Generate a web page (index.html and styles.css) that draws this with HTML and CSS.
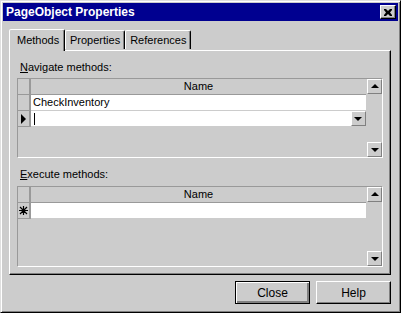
FILE: index.html
```html
<!DOCTYPE html>
<html lang="en">
<head>
    <meta charset="UTF-8">
    <title>PageObject Properties</title>
    <link rel="stylesheet" href="styles.css">
</head>
<body>
    <div class="window">
        <div class="titlebar">
            <span class="title">PageObject Properties</span>
            <span class="close-box">
                <svg width="8" height="7" viewBox="0 0 8 7"><path d="M0 0h2l2 2 2-2h2v1L6 3.5 8 6v1H6L4 5 2 7H0V6l2-2.5L0 1z" fill="#000"/></svg>
            </span>
        </div>

        <div class="tabs">
            <div class="tab active">Methods</div>
            <div class="tab">Properties</div>
            <div class="tab">References</div>
        </div>

        <div class="panel">
            <div class="label"><u>N</u>avigate methods:</div>
            <div class="grid grid-nav">
                <div class="corner"></div>
                <div class="head">Name</div>
                <div class="sb sb-up"><span class="arr up"></span></div>

                <div class="rowhead"></div>
                <div class="cell">CheckInventory</div>

                <div class="rowhead"><span class="arr right"></span></div>
                <div class="cell edit">
                    <span class="caret"></span>
                    <span class="dd"><span class="arr down"></span></span>
                </div>

                <div class="filler"></div>
                <div class="sb sb-down"><span class="arr down"></span></div>
            </div>

            <div class="label second"><u>E</u>xecute methods:</div>
            <div class="grid grid-exec">
                <div class="corner"></div>
                <div class="head">Name</div>
                <div class="sb sb-up"><span class="arr up"></span></div>

                <div class="rowhead">
                    <svg width="9" height="9" viewBox="0 0 9 9"><path d="M4.5 0v9M0 4.5h9M1 1l7 7M8 1l-7 7" stroke="#000" stroke-width="1.2"/></svg>
                </div>
                <div class="cell"></div>

                <div class="filler"></div>
                <div class="sb sb-down"><span class="arr down"></span></div>
            </div>
        </div>

        <div class="buttons">
            <div class="btn default"><span>Close</span></div>
            <div class="btn"><span>Help</span></div>
        </div>
    </div>
</body>
</html>
```

FILE: styles.css
```css
* {
    box-sizing: border-box;
}
body {
    margin: 0;
    font-family: "Liberation Sans", Arial, sans-serif;
    font-size: 11px;
    color: #000;
    background: #ccc;
}
.window {
    width: 401px;
    height: 313px;
    background: #ccc;
    border: 1px solid;
    border-color: #dfdfdf #000 #000 #dfdfdf;
    box-shadow: inset 1px 1px 0 #fff, inset -1px -1px 0 #808080;
    padding: 2px;
    display: flex;
    flex-direction: column;
}
.titlebar {
    height: 18px;
    background: #000090;
    display: flex;
    align-items: center;
    justify-content: space-between;
    padding: 0 2px 0 3px;
}
.title {
    color: #fff;
    font-weight: bold;
    font-size: 12px;
}
.close-box {
    width: 16px;
    height: 14px;
    background: #ccc;
    border: 1px solid;
    border-color: #fff #000 #000 #fff;
    box-shadow: inset -1px -1px 0 #808080;
    display: flex;
    align-items: center;
    justify-content: center;
}

/* tabs */
.tabs {
    display: flex;
    align-items: flex-end;
    margin: 7px 0 0 6px;
    height: 22px;
    position: relative;
    z-index: 1;
}
.tab {
    height: 19px;
    padding: 3px 4px 0 4px;
    border: 1px solid;
    border-bottom: none;
    border-color: #fff #000 transparent #fff;
    border-radius: 2px 2px 0 0;
    box-shadow: inset -1px 0 0 #808080;
    margin-bottom: 1px;
}
.tab.active {
    height: 22px;
    width: 56px;
    padding: 4px 0 0 7px;
    margin-bottom: -1px;
    background: #ccc;
}

.panel {
    margin: 0 7px 0 6px;
    height: 225px;
    border: 1px solid;
    border-color: #fff #000 #000 #fff;
    box-shadow: inset -1px -1px 0 #808080;
    padding: 10px 7px 0 7px;
    display: flex;
    flex-direction: column;
}
.label {
    padding-left: 3px;
    height: 17px;
}
.label.second {
    margin-top: 10px;
    height: 18px;
}

/* data grids */
.grid {
    display: grid;
    grid-template-columns: 13px 1fr 16px;
    border: 1px solid;
    border-color: #999 #fff #fff #999;
    background: #ccc;
}
.grid-nav {
    height: 80px;
    grid-template-rows: 16px 16px 16px 1fr;
}
.grid-exec {
    height: 81px;
    grid-template-rows: 16px 16px 1fr;
}
.corner, .rowhead {
    border-right: 2px solid #999;
    border-bottom: 1px solid #999;
    display: flex;
    align-items: center;
    justify-content: center;
}
.head {
    border-bottom: 1px solid #999;
    text-align: center;
    line-height: 15px;
}
.cell {
    background: #fff;
    border-bottom: 1px solid #ccc;
    padding-left: 2px;
    line-height: 15px;
    grid-column: 2;
}
.cell.edit {
    display: flex;
    align-items: center;
    justify-content: space-between;
    padding-left: 3px;
}
.caret {
    width: 1px;
    height: 12px;
    background: #000;
}
.dd {
    width: 15px;
    height: 15px;
    background: #ccc;
    border: 1px solid;
    border-color: #fff #808080 #808080 #fff;
    display: flex;
    align-items: center;
    justify-content: center;
}
.filler {
    grid-column: 1 / 3;
}
.sb {
    grid-column: 3;
    display: flex;
    justify-content: center;
}
.sb-up {
    grid-row: 1 / 4;
    align-items: flex-start;
}
.grid-exec .sb-up {
    grid-row: 1 / 3;
}
.sb-down {
    align-items: flex-end;
}
.sb .arr {
    width: 15px;
    height: 15px;
    background: #ccc;
    border: 1px solid;
    border-color: #fff #808080 #808080 #fff;
    position: relative;
}
.arr.up::after, .arr.down::after, .arr.right::after {
    content: "";
    position: absolute;
    width: 0;
    height: 0;
    border: 4px solid transparent;
}
.arr.up::after {
    left: 3px;
    top: 4px;
    border-top: none;
    border-bottom: 4px solid #000;
}
.arr.down::after {
    left: 3px;
    top: 5px;
    border-bottom: none;
    border-top: 4px solid #000;
}
.dd .arr.down {
    position: relative;
    width: 7px;
    height: 4px;
}
.dd .arr.down::after {
    left: -1px;
    top: 0;
}
.arr.right {
    position: relative;
    width: 5px;
    height: 10px;
}
.arr.right::after {
    left: 0;
    top: 0;
    border-width: 5px;
    border-right: none;
    border-left: 5px solid #000;
}

/* buttons */
.buttons {
    display: flex;
    justify-content: flex-end;
    gap: 6px;
    margin: 6px 7px 0 0;
}
.btn {
    width: 75px;
    height: 23px;
    border: 1px solid;
    border-color: #fff #000 #000 #fff;
    box-shadow: inset -1px -1px 0 #808080;
    display: flex;
    align-items: center;
    justify-content: center;
    font-size: 12px;
}
.btn.default {
    border: 1px solid #000;
    box-shadow: inset 1px 1px 0 #fff, inset -2px -2px 0 #808080;
}
```
